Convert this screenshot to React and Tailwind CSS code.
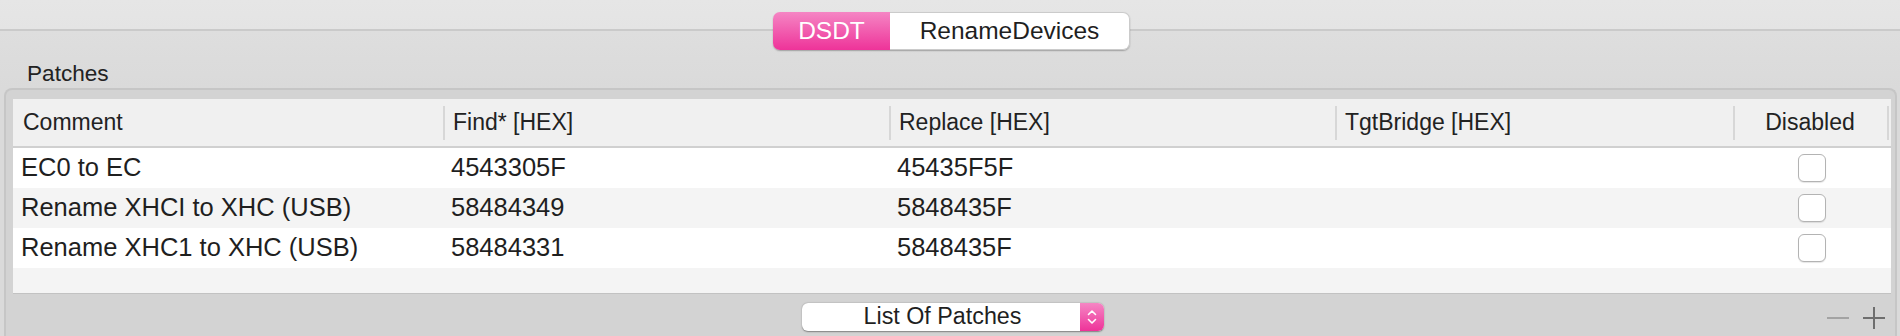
import React from "react";

const cols = ["Comment", "Find* [HEX]", "Replace [HEX]", "TgtBridge [HEX]", "Disabled"];
const rows = [
  ["EC0 to EC", "4543305F", "45435F5F", ""],
  ["Rename XHCI to XHC (USB)", "58484349", "5848435F", ""],
  ["Rename XHC1 to XHC (USB)", "58484331", "5848435F", ""],
];

function Checkbox() {
  return (
    <div className="w-[28px] h-[28px] rounded-[6px] border border-[#b3b3b3] bg-white shadow-[0_1px_1px_rgba(0,0,0,0.1)]" />
  );
}

export default function App() {
  return (
    <div
      className="w-[1900px] h-[336px] overflow-hidden flex flex-col bg-[linear-gradient(to_bottom,#e6e6e6_0px,#e4e4e4_29px,#cacaca_29px,#cacaca_31px,#dedede_31px,#dadada_88px)] text-[#1f1f1f]"
      style={{ fontFamily: '"Liberation Sans", Arial, sans-serif' }}
    >
      {/* Segmented control */}
      <div className="pt-[12px] flex justify-center">
        <div className="ml-[3px] flex h-[38px] rounded-[7px] shadow-[0_1px_1.5px_rgba(0,0,0,0.28)]">
          <div className="w-[117px] flex items-center justify-center rounded-l-[7px] bg-[linear-gradient(to_bottom,#f586c4,#ee3399)] text-white text-[24.5px] leading-none">
            DSDT
          </div>
          <div className="w-[240px] flex items-center justify-center rounded-r-[7px] bg-white border border-l-0 border-[#cbcbcb] text-[24.5px] leading-none text-[#1f1f1f]">
            RenameDevices
          </div>
        </div>
      </div>

      {/* Label */}
      <div className="h-[38px] pt-[10px] pl-[27px] flex items-center text-[22.6px] leading-none text-[#222]">
        Patches
      </div>

      {/* Box */}
      <div className="flex-1 ml-[4px] mr-[3px] border-2 border-b-0 border-[#c6c6c6] rounded-t-[8px] bg-[#d3d3d3] pt-[9px] pl-[7px] pr-[4px] flex flex-col">
        <div className="border-b border-[#c2c2c2]">
          {/* Header */}
          <div className="grid grid-cols-[430px_446px_446px_398px_158px] h-[49px] bg-[#f0f0f0] border-b-2 border-[#d0d0d0]">
            {cols.map((c, i) => (
              <div key={c} className="flex items-center">
                {i > 0 && <div className="w-[2px] h-[34px] bg-[#d7d7d7]" />}
                <div
                  className={
                    "flex-1 text-[23px] leading-none text-[#222] " +
                    (i === 4 ? "text-center pr-[2px]" : i === 0 ? "pl-[10px]" : "pl-[8px]")
                  }
                >
                  {c}
                </div>
                {i === 4 && <div className="w-[2px] h-[34px] bg-[#d7d7d7] mr-[2px]" />}
              </div>
            ))}
          </div>
          {/* Rows */}
          {rows.map((r, ri) => (
            <div
              key={ri}
              className={
                "grid grid-cols-[430px_446px_446px_398px_158px] h-[40px] " +
                (ri % 2 === 1 ? "bg-[#f4f4f4]" : "bg-white")
              }
            >
              {r.map((v, ci) => (
                <div key={ci} className="flex items-center pl-[8px] text-[25.5px] leading-none text-[#1f1f1f]">
                  {v}
                </div>
              ))}
              <div className="flex items-center justify-center pr-[1px]">
                <Checkbox />
              </div>
            </div>
          ))}
          <div className="h-[25px] bg-[#f4f4f4]" />
        </div>

        {/* Bottom bar */}
        <div className="grid grid-cols-[1fr_auto_1fr] items-center pt-[9px]">
          <div />
          <div className="ml-[1px] flex h-[28px] w-[302px] rounded-[6px] bg-white shadow-[0_0.5px_1.5px_rgba(0,0,0,0.4)]">
            <div className="flex-1 flex items-center justify-center text-[23.3px] leading-none text-[#1f1f1f] pl-[4px]">
              List Of Patches
            </div>
            <div className="w-[24px] rounded-r-[6px] bg-[linear-gradient(to_bottom,#f586c4,#ee3399)] flex items-center justify-center">
              <svg width="12" height="20" viewBox="0 0 12 20" fill="none">
                <path d="M2.5 7.5 L6 4 L9.5 7.5" stroke="white" strokeWidth="1.6" strokeLinecap="round" strokeLinejoin="round" />
                <path d="M2.5 12.5 L6 16 L9.5 12.5" stroke="white" strokeWidth="1.6" strokeLinecap="round" strokeLinejoin="round" />
              </svg>
            </div>
          </div>
          <div className="flex justify-end items-center gap-[14px] pr-[6px] pt-[1px]">
            <svg width="22" height="22" viewBox="0 0 22 22">
              <rect x="0" y="10" width="22" height="2" fill="#a3a3a3" />
            </svg>
            <svg width="22" height="22" viewBox="0 0 22 22">
              <rect x="0" y="10" width="22" height="2" fill="#6e6e6e" />
              <rect x="10" y="0" width="2" height="22" fill="#6e6e6e" />
            </svg>
          </div>
        </div>
      </div>
    </div>
  );
}
